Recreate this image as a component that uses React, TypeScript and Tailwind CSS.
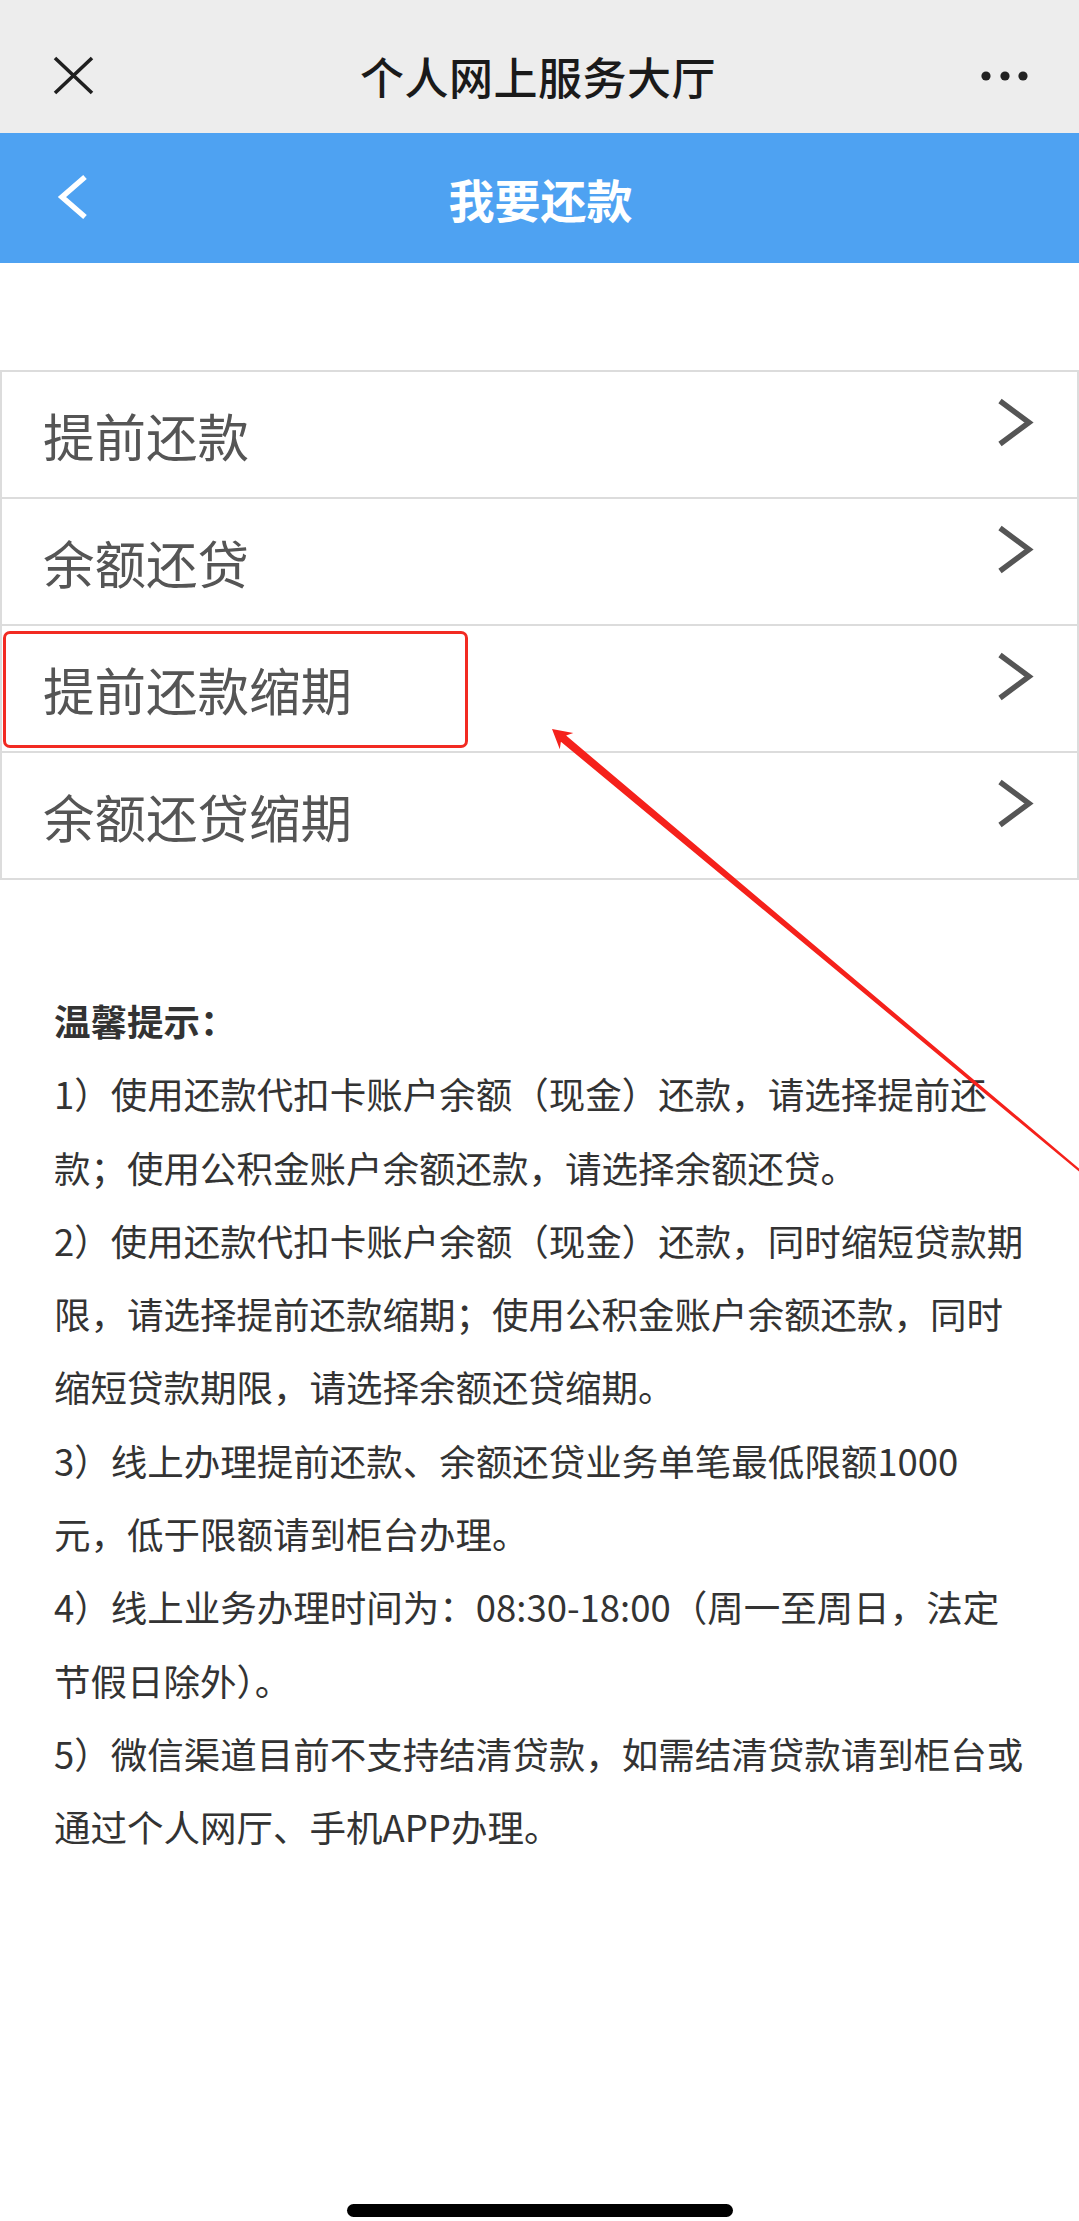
import React from "react";

const items = ["提前还款", "余额还贷", "提前还款缩期", "余额还贷缩期"];

const tips = [
  "1）使用还款代扣卡账户余额（现金）还款，请选择提前还",
  "款；使用公积金账户余额还款，请选择余额还贷。",
  "2）使用还款代扣卡账户余额（现金）还款，同时缩短贷款期",
  "限，请选择提前还款缩期；使用公积金账户余额还款，同时",
  "缩短贷款期限，请选择余额还贷缩期。",
  "3）线上办理提前还款、余额还贷业务单笔最低限额1000",
  "元，低于限额请到柜台办理。",
  "4）线上业务办理时间为：08:30-18:00（周一至周日，法定",
  "节假日除外）。",
  "5）微信渠道目前不支持结清贷款，如需结清贷款请到柜台或",
  "通过个人网厅、手机APP办理。",
];

function Chevron() {
  return (
    <svg width="40" height="52" viewBox="0 0 40 52" className="shrink-0 mb-[22px]">
      <path d="M5 3 L34 24.5 L5 46" fill="none" stroke="#555555" strokeWidth="5.5" strokeLinejoin="miter" />
    </svg>
  );
}

export default function App() {
  // arrow geometry
  const tip = [552, 729];
  const d = [0.767, 0.642];
  const p = [-0.642, 0.767];
  const at = (t: number, s: number) => [tip[0] + d[0] * t + p[0] * s, tip[1] + d[1] * t + p[1] * s];
  const pts = [
    at(0, 0),
    at(19, 10.5),
    at(15, 4),
    at(730, 1),
    at(730, -1),
    at(15, -4),
    at(19, -10.5),
  ]
    .map((q) => `${q[0].toFixed(1)},${q[1].toFixed(1)}`)
    .join(" ");

  return (
    <div className="relative w-full h-[2221px] bg-white flex flex-col overflow-hidden font-['Noto_Sans_CJK_SC','Noto_Sans',sans-serif]">
      {/* WeChat top bar */}
      <div className="h-[133px] bg-[#ededed] flex items-center justify-between pt-[19px] pl-[53px] pr-[48px] shrink-0">
        <svg width="42" height="40" viewBox="0 0 42 40">
          <path d="M2 2 L39 37 M39 2 L2 37" stroke="#1f1f1f" strokeWidth="3.6" strokeLinecap="butt" />
        </svg>
        <div className="text-[44px] leading-none text-[#1a1a1a] font-medium tracking-[0.5px]">个人网上服务大厅</div>
        <svg width="50" height="12" viewBox="0 0 50 12">
          <circle cx="5" cy="6" r="4.6" fill="#222" />
          <circle cx="24" cy="6" r="4.6" fill="#222" />
          <circle cx="42" cy="6" r="4.6" fill="#222" />
        </svg>
      </div>

      {/* Blue header */}
      <div className="h-[130px] bg-[#4ea2f2] flex items-center relative shrink-0">
        <svg width="40" height="50" viewBox="0 0 40 50" className="ml-[54px]">
          <path d="M31 4 L8 24 L31 44" fill="none" stroke="#ffffff" strokeWidth="5.5" />
        </svg>
        <div className="absolute inset-0 flex items-center justify-center pointer-events-none">
          <span className="text-[46px] leading-none text-white font-bold ml-[2px]">我要还款</span>
        </div>
      </div>

      {/* List */}
      <div className="mt-[107px] border-t-[2px] border-x-[2px] border-[#dcdcdc] shrink-0">
        {items.map((t, i) => (
          <div
            key={t}
            className="relative h-[127px] border-b-[2px] border-[#dcdcdc] flex items-center justify-between pl-[41px] pr-[42px]"
          >
            <span className="text-[51.5px] leading-none text-[#555555]">{t}</span>
            <Chevron />
            {i === 2 && (
              <div className="absolute left-[1px] top-[5px] w-[465px] h-[117px] border-[3.5px] border-[#f22a22] rounded-[7px]" />
            )}
          </div>
        ))}
      </div>

      {/* Tips */}
      <div className="mt-[104px] px-[54px] text-[36.5px] leading-[73.3px] text-[#333333]">
        <div className="font-bold whitespace-nowrap">温馨提示：</div>
        {tips.map((l) => (
          <div key={l} className="whitespace-nowrap">
            {l}
          </div>
        ))}
      </div>

      {/* Home indicator */}
      <div className="mt-auto mb-[4px] flex justify-center shrink-0">
        <div className="w-[386px] h-[13px] rounded-full bg-black" />
      </div>

      {/* Annotation arrow */}
      <svg
        className="absolute top-0 left-0 pointer-events-none"
        width="1079"
        height="2221"
        viewBox="0 0 1079 2221"
      >
        <polygon points={pts} fill="#f5211b" />
      </svg>
    </div>
  );
}
